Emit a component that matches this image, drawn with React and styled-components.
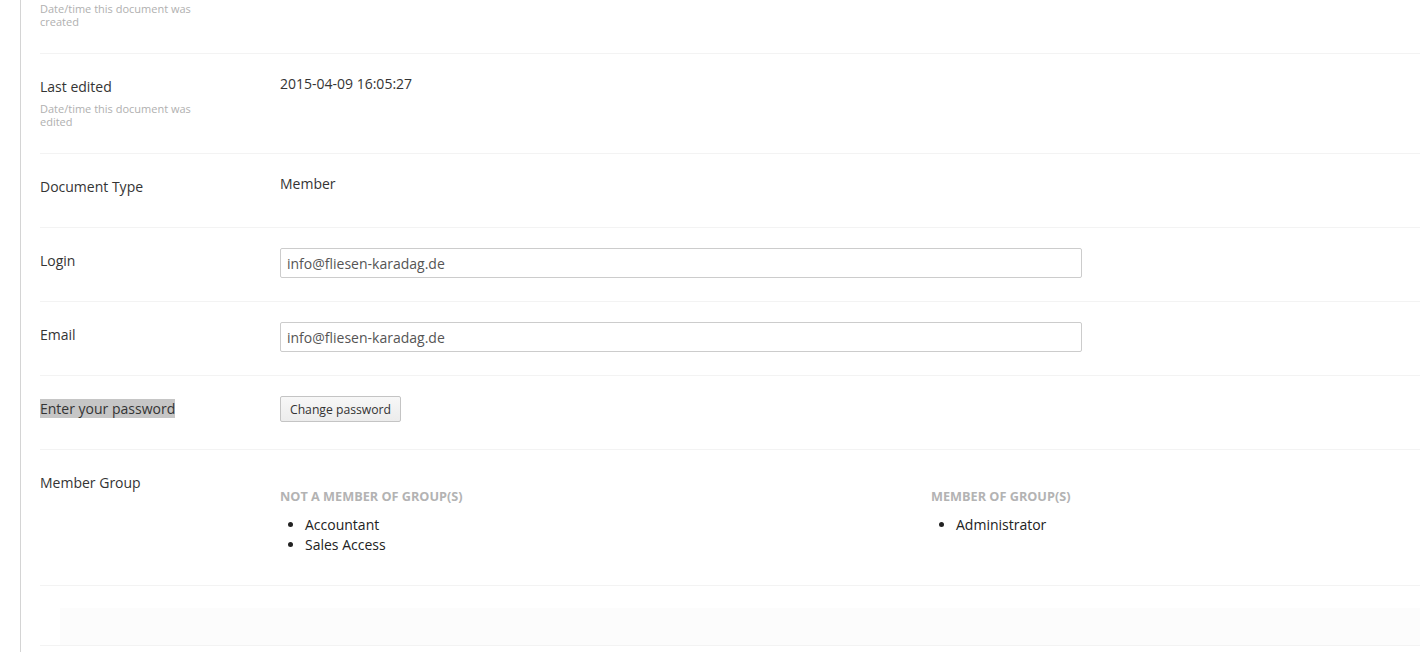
import React from 'react';
import styled, { createGlobalStyle } from 'styled-components';

const GlobalStyle = createGlobalStyle`
  html, body {
    margin: 0;
    padding: 0;
    background: #fff;
    overflow: hidden;
  }
  body {
    font-family: 'Open Sans', 'Liberation Sans', sans-serif;
    color: #343434;
  }
`;

const Page = styled.div`
  padding-left: 20px;
  height: 652px;
  overflow: hidden;
`;

const Panel = styled.div`
  display: flow-root;
  border-left: 1px solid #d4d4d4;
  padding-left: 19px;
  height: 100%;
`;

// the panel is scrolled down a little, so the first row is cut off at the top
const Scroller = styled.div`
  margin-top: -46px;
`;

const Row = styled.div`
  display: flex;
  box-sizing: border-box;
  min-height: ${(p) => (p.$tall ? 100 : p.$h || 74)}px;
  padding-top: 20px;
  border-bottom: 1px solid #f3f3f3;
`;

const LabelCol = styled.div`
  width: 240px;
  flex: none;
  padding-top: 3px;
`;

const Label = styled.div`
  min-height: 20px;
  font-size: 14px;
  line-height: 20px;
  color: #343434;
`;

const Selected = styled.span`
  background: #c6c6c6;
`;

const Description = styled.div`
  width: 165px;
  margin-top: 5px;
  font-size: 11px;
  line-height: 13px;
  color: #b0b0b0;
`;

const ValueCol = styled.div`
  flex: 1;
  min-width: 0;
`;

const Text = styled.div`
  font-size: 14px;
  line-height: 20px;
  color: #343434;
`;

const Input = styled.input`
  display: block;
  box-sizing: border-box;
  width: 802px;
  height: 30px;
  padding: 0 6px;
  border: 1px solid #cccccc;
  border-radius: 2px;
  font-family: 'Open Sans', 'Liberation Sans', sans-serif;
  font-size: 14px;
  color: #555;
  background: #fff;
  outline: none;
`;

const Button = styled.button`
  box-sizing: border-box;
  height: 26px;
  width: 121px;
  padding: 0;
  border: 1px solid #c4c4c4;
  border-radius: 2px;
  background: linear-gradient(#f7f7f7, #ececec);
  font-family: 'Open Sans', 'Liberation Sans', sans-serif;
  font-size: 12.2px;
  white-space: nowrap;
  color: #333;
  cursor: pointer;
`;

const Groups = styled.div`
  display: grid;
  grid-template-columns: 651px 1fr;
  padding-top: 18px;
`;

const GroupTitle = styled.div`
  font-size: 12.7px;
  font-weight: 700;
  line-height: 16px;
  text-transform: uppercase;
  color: #b3b3b3;
`;

const GroupList = styled.ul`
  margin: 11px 0 0;
  padding-left: 25px;
  list-style: disc;
  color: #444;

  li {
    font-size: 14px;
    line-height: 20px;
    color: #222;
  }
`;

const Footer = styled.div`
  padding-top: 22px;
  border-bottom: 1px solid #f3f3f3;
`;

const FooterBar = styled.div`
  margin-left: 20px;
  height: 37px;
  background: #fcfcfc;
`;

const Field = ({ label, description, tall, h, children }) => (
  <Row $tall={tall} $h={h}>
    <LabelCol>
      <Label>{label}</Label>
      {description && <Description>{description}</Description>}
    </LabelCol>
    <ValueCol>{children}</ValueCol>
  </Row>
);

const App = () => {
  return (
    <Page>
      <GlobalStyle />
      <Panel>
        <Scroller>
          <Field label='' description='Date/time this document was created' tall />
          <Field label='Last edited' description='Date/time this document was edited' tall>
            <Text>2015-04-09 16:05:27</Text>
          </Field>
          <Field label='Document Type'>
            <Text>Member</Text>
          </Field>
          <Field label='Login'>
            <Input defaultValue='info@fliesen-karadag.de' />
          </Field>
          <Field label='Email'>
            <Input defaultValue='info@fliesen-karadag.de' />
          </Field>
          <Field label={<Selected>Enter your password</Selected>}>
            <Button>Change password</Button>
          </Field>
          <Field label='Member Group' h={136}>
            <Groups>
              <div>
                <GroupTitle>Not a member of group(s)</GroupTitle>
                <GroupList>
                  <li>Accountant</li>
                  <li>Sales Access</li>
                </GroupList>
              </div>
              <div>
                <GroupTitle>Member of group(s)</GroupTitle>
                <GroupList>
                  <li>Administrator</li>
                </GroupList>
              </div>
            </Groups>
          </Field>
          <Footer>
            <FooterBar />
          </Footer>
        </Scroller>
      </Panel>
    </Page>
  );
};

export default App;
